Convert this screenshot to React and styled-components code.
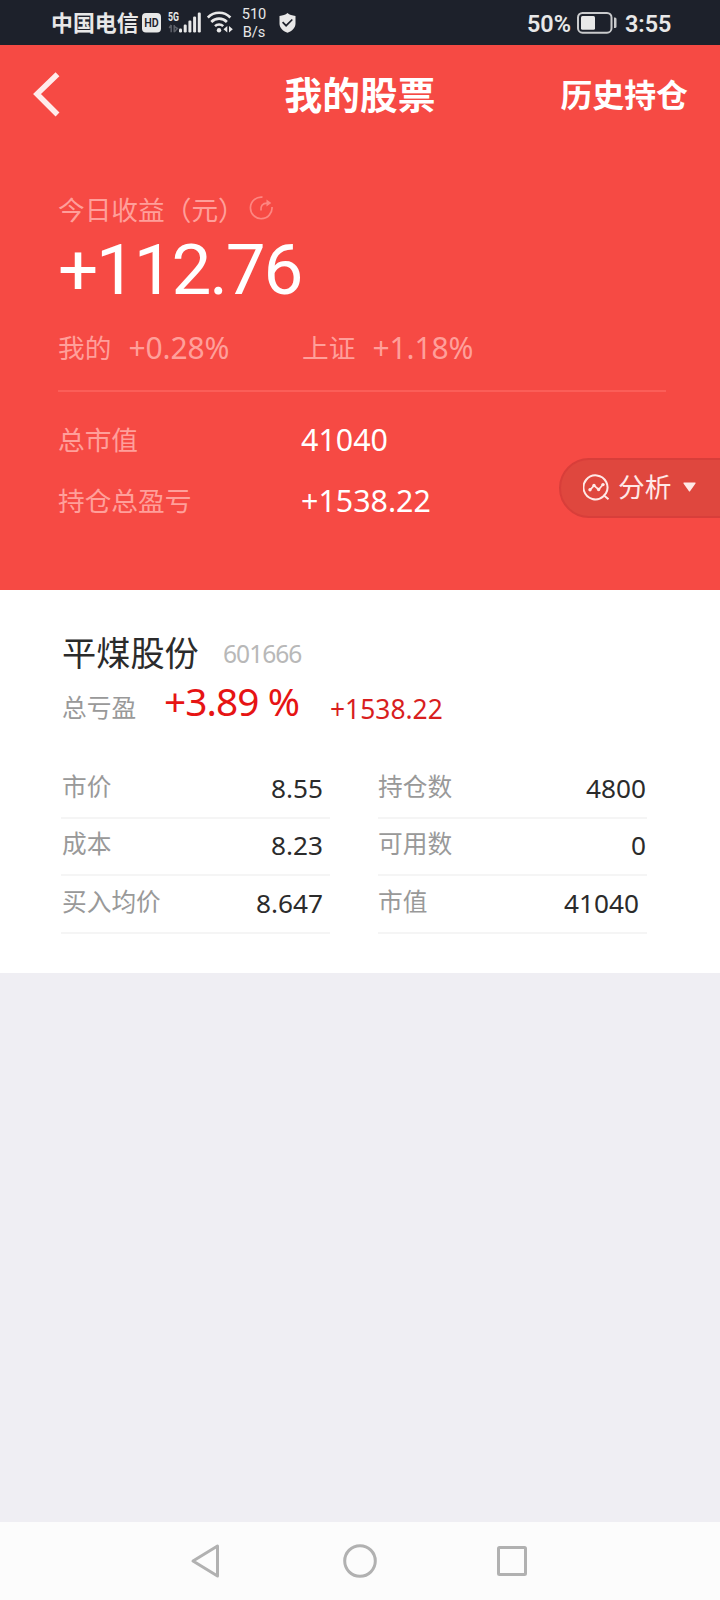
import React from 'react';
import styled, { createGlobalStyle } from 'styled-components';

const GlobalStyle = createGlobalStyle`
  * {
    box-sizing: border-box;
  }
  body {
    margin: 0;
    background: #efeef3;
    font-family: "Noto Sans", "Noto Sans CJK SC", sans-serif;
  }
`;

const Page = styled.div`
  display: flex;
  flex-direction: column;
  width: 720px;
  height: 1600px;
  overflow: hidden;
  background: #efeef3;
`;

// status bar
const StatusBarStyled = styled.div`
  display: flex;
  justify-content: space-between;
  align-items: center;
  height: 45px;
  padding: 0 48px 0 51px;
  background: #1d212b;
  color: #e8e8e8;
  flex-shrink: 0;
`;
const StatusGroup = styled.div`
  display: flex;
  align-items: center;
  svg {
    display: block;
  }
`;
const Carrier = styled.span`
  width: 91px;
  padding-bottom: 1px;
  font-size: 21.9px;
  line-height: 44px;
  font-weight: 700;
  white-space: nowrap;
  font-family: "Noto Sans CJK SC", sans-serif;
`;
const NetSpeed = styled.div`
  width: 32px;
  margin: 0 9px 0 5px;
  font-family: Roboto, sans-serif;
  font-size: 14.6px;
  line-height: 18px;
  text-align: center;
`;
const StatusText = styled.span`
  width: ${(p) => p.$width}px;
  margin-left: ${(p) => p.$gap || 0}px;
  font-family: Roboto, "Noto Sans", sans-serif;
  font-size: 23.4px;
  line-height: 44px;
  font-weight: 600;
  padding-top: 2px;
  white-space: nowrap;
`;

// red block
const Hero = styled.section`
  position: relative;
  height: 545px;
  background: #f64a44;
  color: #fff;
  flex-shrink: 0;
`;
const NavBar = styled.header`
  display: grid;
  grid-template-columns: 1fr auto 1fr;
  align-items: center;
  height: 100px;
  padding: 0 32px;
`;
const BackButton = styled.button`
  display: flex;
  justify-self: start;
  padding: 0;
  border: 0;
  background: none;
`;
const Title = styled.h1`
  margin: 0;
  padding-bottom: 4px;
  font-size: 37.7px;
  line-height: 60px;
  font-weight: 700;
  font-family: "Noto Sans CJK SC", sans-serif;
`;
const NavLink = styled.span`
  justify-self: end;
  padding-bottom: 4px;
  font-size: 31.9px;
  line-height: 60px;
  font-weight: 700;
  font-family: "Noto Sans CJK SC", sans-serif;
`;
const Summary = styled.div`
  padding: 46px 54px 0 58px;
`;
const SummaryLabel = styled.div`
  display: flex;
  align-items: center;
  height: 36px;
  font-size: 26.7px;
  line-height: 35px;
  color: #ff9f9a;
  svg {
    margin-left: 4px;
    margin-bottom: 2px;
  }
`;
const TodayIncome = styled.div`
  height: 80px;
  font-family: Roboto, "Noto Sans", sans-serif;
  font-size: 71px;
  line-height: 86px;
  letter-spacing: -2.2px;
`;
const CompareRow = styled.div`
  display: grid;
  grid-template-columns: 244px 1fr;
  height: 40px;
  margin-top: 21px;
  line-height: 40px;
  color: #ff9f9a;
`;
const Compare = styled.div`
  display: flex;
  gap: 17px;
  font-size: 26.7px;
`;
const Percent = styled.span`
  font-size: 30px;
  line-height: 39px;
  letter-spacing: -0.1px;
`;
const Divider = styled.div`
  height: 2px;
  margin: 22px 0 18px;
  background: #fb5e58;
`;
const TotalRow = styled.div`
  display: grid;
  grid-template-columns: 243px 1fr;
  height: 61px;
  line-height: 59px;
`;
const TotalLabel = styled.span`
  font-size: 26.7px;
  color: #ff9f9a;
`;
const TotalValue = styled.span`
  font-size: 30.4px;
  line-height: 59px;
`;
const AnalyseButton = styled.button`
  position: absolute;
  right: -2px;
  top: 413px;
  display: flex;
  align-items: center;
  width: 163px;
  height: 60px;
  padding: 0 0 2px 22px;
  border: 2px solid #d83e3a;
  border-radius: 30px 0 0 30px;
  background: #df473e;
  color: #ffe9e7;
  font-family: "Noto Sans CJK SC", sans-serif;
  font-size: 26.7px;
  line-height: 40px;
  span {
    margin: 0 12px 2px 8px;
  }
`;

// holding card
const Card = styled.section`
  height: 383px;
  padding: 43px 73px 0 62px;
  background: #fff;
  flex-shrink: 0;
`;
const StockHead = styled.div`
  display: flex;
  align-items: center;
  height: 40px;
`;
const StockName = styled.h2`
  width: 161px;
  margin: 0;
  font-size: 34.2px;
  line-height: 42px;
  font-weight: 400;
  color: #2b2b2b;
`;
const StockCode = styled.span`
  padding-top: 1px;
  font-size: 24.6px;
  line-height: 38px;
  letter-spacing: -1px;
  color: #b8b8b8;
`;
const ProfitRow = styled.div`
  display: flex;
  align-items: center;
  height: 68px;
`;
const ProfitLabel = styled.span`
  width: 102px;
  padding-top: 2px;
  font-size: 24.7px;
  line-height: 40px;
  color: #999;
`;
const ProfitRate = styled.span`
  width: 166px;
  padding-bottom: 12px;
  font-size: 38.8px;
  line-height: 40px;
  letter-spacing: -0.9px;
  color: #e61414;
  white-space: nowrap;
`;
const ProfitAmount = styled.span`
  padding-top: 3px;
  font-size: 26.4px;
  line-height: 40px;
  color: #d81e1e;
`;
const Figures = styled.div`
  display: grid;
  grid-template-columns: 269px 269px;
  grid-template-rows: 57px 57px 58px;
  padding-top: 21px;
  margin-left: -1px;
  justify-content: space-between;
`;
const Figure = styled.div`
  display: flex;
  justify-content: space-between;
  align-items: center;
  border-bottom: 2px solid #f5f5f5;
  padding-right: ${(p) => p.$inset}px;
  &:nth-child(odd) {
    padding-left: 1px;
  }
`;
const FigureLabel = styled.span`
  padding-bottom: 5px;
  font-size: 24.7px;
  line-height: 40px;
  color: #999;
`;
const FigureValue = styled.span`
  padding-bottom: 3px;
  font-size: 26.2px;
  line-height: 40px;
  color: #2b2b2b;
`;

// android navigation keys
const SystemNav = styled.nav`
  display: flex;
  justify-content: space-between;
  align-items: center;
  height: 78px;
  margin-top: auto;
  padding: 0 192px 0 189px;
  background: #fcfcfc;
  svg {
    display: block;
    fill: none;
    stroke: #b1b1b1;
    stroke-width: 3;
    stroke-linejoin: round;
  }
`;

const figures = [
  { label: '市价', value: '8.55', inset: 7 },
  { label: '持仓数', value: '4800', inset: 1 },
  { label: '成本', value: '8.23', inset: 7 },
  { label: '可用数', value: '0', inset: 1 },
  { label: '买入均价', value: '8.647', inset: 7 },
  { label: '市值', value: '41040', inset: 8 },
];

function HdIcon() {
  return (
    <svg width="19" height="20" viewBox="0 0 19 20">
      <rect width="19" height="19.5" rx="4" fill="#e8e8e8" />
      <text x="2.2" y="14.3" textLength="14.5" lengthAdjust="spacingAndGlyphs" fontFamily="Roboto, sans-serif" fontSize="13" fontWeight="600" fill="#1d212b">HD</text>
    </svg>
  );
}

function SignalIcon() {
  const tops = [28.5, 24.5, 20.5, 16.5, 12.5];
  return (
    <svg width="46" height="45" viewBox="0 0 46 45" fill="#e8e8e8">
      <text x="7" y="21" textLength="11" lengthAdjust="spacingAndGlyphs" fontFamily="Roboto, sans-serif" fontSize="12.5" fontWeight="700">5G</text>
      <path d="M10.200 25v7.200M10.200 25l-2 3M13.200 25v7.200M13.200 32l3.200-3.500-3.200-2" stroke="#5d6068" strokeWidth="1.500" fill="none" />
      {tops.map((top, i) => (
        <rect key={top} x={18 + i * 4.7} y={top} width="3" height={32.5 - top} rx="1.2" />
      ))}
    </svg>
  );
}

function WifiIcon() {
  return (
    <svg width="26" height="45" viewBox="0 0 26 45" fill="none" stroke="#e8e8e8" strokeWidth="2.6">
      <path d="M.8 17.500a15.800 15.800 0 0 1 22.600 0" />
      <path d="M4.300 22a10.800 10.800 0 0 1 15.600 0" />
      <path d="M8 26.200a5.800 5.800 0 0 1 8.200 0" />
      <circle cx="12" cy="30.300" r="2.200" fill="#e8e8e8" stroke="none" />
      <path d="M20.300 26v6.500l-3.800-3.200zM22 26v6.500l3.800-3.200z" fill="#e8e8e8" stroke="none" />
    </svg>
  );
}

function ShieldIcon() {
  return (
    <svg width="17" height="20" viewBox="0 0 17 20">
      <path d="M8.500 0C10.500 1.800 13.200 2.600 16.500 3v7.500c0 4.200-3.200 7.500-8 9.200-4.800-1.700-8-5-8-9.200V3c3.300-.4 6-1.200 8-3z" fill="#e8e8e8" />
      <path d="M3.600 9.200l3.500 3.500 6.200-6.200" fill="none" stroke="#1d212b" strokeWidth="1.700" />
    </svg>
  );
}

function BatteryIcon() {
  return (
    <svg width="41" height="22" viewBox="0 0 41 22">
      <rect x="1" y="1" width="33.500" height="19.700" rx="4.500" fill="none" stroke="#c9cacc" strokeWidth="2" />
      <rect x="4" y="4" width="14" height="13.700" rx="1.500" fill="#e8e8e8" />
      <path d="M37 5.500h1q1.500 0 1.500 1.500v7.500q0 1.500-1.500 1.500H37z" fill="#c9cacc" />
    </svg>
  );
}

function StatusBar() {
  return (
    <StatusBarStyled>
      <StatusGroup>
        <Carrier>中国电信</Carrier>
        <HdIcon />
        <SignalIcon />
        <WifiIcon />
        <NetSpeed>
          <div>510</div>
          <div>B/s</div>
        </NetSpeed>
        <ShieldIcon />
      </StatusGroup>
      <StatusGroup>
        <StatusText $width={50}>50%</StatusText>
        <BatteryIcon />
        <StatusText $width={47} $gap={7}>3:55</StatusText>
      </StatusGroup>
    </StatusBarStyled>
  );
}

export default function App() {
  return (
    <>
      <GlobalStyle />
      <Page>
        <StatusBar />
        <Hero>
          <NavBar>
            <BackButton>
              <svg width="30" height="48" viewBox="0 0 30 48" fill="none" stroke="#ffeceb" strokeWidth="5.500">
                <path d="M25.500 3.200L5 23l20.500 20.500" />
              </svg>
            </BackButton>
            <Title>我的股票</Title>
            <NavLink>历史持仓</NavLink>
          </NavBar>
          <Summary>
            <SummaryLabel>
              今日收益（元）
              <svg width="25" height="25" viewBox="0 0 25 25" fill="none" stroke="#fd8681" strokeWidth="1.700">
                <path d="M13.500 1.200A10.800 10.800 0 1 0 23 11" />
                <path d="M12 14.500C11.500 10 13 7.200 18.500 7.200" />
                <path d="M17.500 3.500l4.800 3.600-4.800 3.500z" fill="#fd8681" stroke="none" />
              </svg>
            </SummaryLabel>
            <TodayIncome>+112.76</TodayIncome>
            <CompareRow>
              <Compare>
                我的 <Percent>+0.28%</Percent>
              </Compare>
              <Compare>
                上证 <Percent>+1.18%</Percent>
              </Compare>
            </CompareRow>
            <Divider />
            <TotalRow>
              <TotalLabel>总市值</TotalLabel>
              <TotalValue>41040</TotalValue>
            </TotalRow>
            <TotalRow>
              <TotalLabel>持仓总盈亏</TotalLabel>
              <TotalValue>+1538.22</TotalValue>
            </TotalRow>
          </Summary>
          <AnalyseButton>
            <svg width="27" height="27" viewBox="0 0 27 27" fill="none" stroke="#ffe9e7" strokeWidth="2">
              <path d="M20.500 22.300A12 12 0 1 1 22.800 19.500L21 21.500L25.500 25.300M20.500 22.300L21 21.500" />
              <path d="M7 15.800l4-4.200 4.700 3.900 4.300-5" strokeWidth="1.700" />
              <g fill="#ffe9e7" stroke="none">
                <circle cx="7" cy="15.800" r="1.700" />
                <circle cx="11" cy="11.400" r="1.700" />
                <circle cx="15.600" cy="15.500" r="1.700" />
                <circle cx="20" cy="10.600" r="1.700" />
              </g>
            </svg>
            <span>分析</span>
            <svg width="13" height="10" viewBox="0 0 13 10">
              <path d="M1 .5h11q1 0 .5 1L7.200 9q-.7 1-1.400 0L.5 1.500Q0 .5 1 .5z" fill="#ffe9e7" />
            </svg>
          </AnalyseButton>
        </Hero>
        <Card>
          <StockHead>
            <StockName>平煤股份</StockName>
            <StockCode>601666</StockCode>
          </StockHead>
          <ProfitRow>
            <ProfitLabel>总亏盈</ProfitLabel>
            <ProfitRate>+3.89 %</ProfitRate>
            <ProfitAmount>+1538.22</ProfitAmount>
          </ProfitRow>
          <Figures>
            {figures.map((item) => (
              <Figure key={item.label} $inset={item.inset}>
                <FigureLabel>{item.label}</FigureLabel>
                <FigureValue>{item.value}</FigureValue>
              </Figure>
            ))}
          </Figures>
        </Card>
        <SystemNav>
          <svg width="32" height="36" viewBox="0 0 32 36">
            <path d="M28.500 3v30L4 18z" />
          </svg>
          <svg width="36" height="34" viewBox="0 0 36 34">
            <circle cx="19" cy="17" r="15.300" />
          </svg>
          <svg width="32" height="32" viewBox="0 0 32 32">
            <rect x="2.500" y="2.500" width="27" height="27" rx="1" />
          </svg>
        </SystemNav>
      </Page>
    </>
  );
}
